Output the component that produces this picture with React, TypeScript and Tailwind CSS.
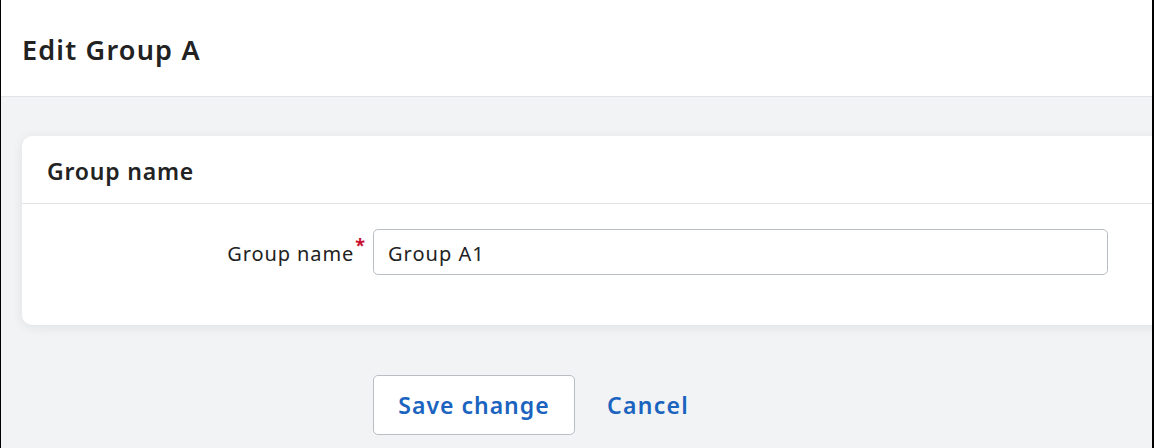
import React from "react";

export default function App() {
  return (
    <div
      className="w-[1154px] h-[448px] overflow-hidden bg-[#f2f3f5] border-l border-r-2 border-black text-[#222]"
      style={{ fontFamily: "'Noto Sans', sans-serif" }}
    >
      <div className="h-[97px] bg-white border-b border-[#e1e3e6] flex items-center pl-[21px]">
        <h1 className="text-[27px] font-semibold leading-none tracking-[1.2px] mt-[2px]">Edit Group A</h1>
      </div>
      <div className="pt-[39px] pl-[21px]">
        <div className="w-[1200px] bg-white rounded-l-[10px] shadow-[0_2px_12px_rgba(0,0,0,0.08)]">
          <div className="h-[68px] border-b border-[#e1e3e6] flex items-center pl-[25px]">
            <h2 className="text-[23px] font-semibold leading-none tracking-[0.8px] mt-[3px]">Group name</h2>
          </div>
          <div className="pt-[25px] pb-[50px] flex items-center">
            <div className="w-[343px] flex justify-end items-center mt-[3px]">
              <label className="text-[20px] leading-none tracking-[0.9px]">Group name</label>
              <span className="text-[#c8102e] text-[18px] font-bold leading-none self-start -mt-[8px] ml-[1px]">*</span>
            </div>
            <input
              className="ml-[8px] w-[735px] h-[46px] border border-[#b9bec4] rounded-[5px] px-[14px] pt-[3px] text-[20px] tracking-[1px] text-[#222] outline-none"
              style={{ fontFamily: "'Noto Sans', sans-serif" }}
              defaultValue="Group A1"
            />
          </div>
        </div>
        <div className="mt-[50px] pl-[351px] flex items-center">
          <button className="w-[202px] h-[60px] pt-[1px] bg-white border border-[#b9bec4] rounded-[5px] text-[23px] font-semibold tracking-[1px] text-[#1a63bf]">
            Save change
          </button>
          <button className="ml-[32px] pt-[1px] text-[23px] font-semibold tracking-[1.3px] text-[#1a63bf]">Cancel</button>
        </div>
      </div>
    </div>
  );
}
